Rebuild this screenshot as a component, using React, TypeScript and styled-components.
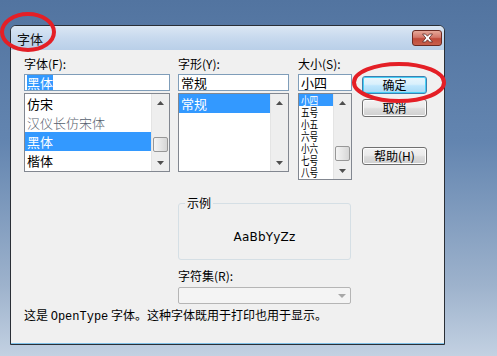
import styled, { createGlobalStyle } from 'styled-components'

const Global = createGlobalStyle`
  html, body {
    margin: 0;
    padding: 0;
  }
  body {
    font-family: "Noto Sans CJK SC", "Liberation Sans", sans-serif;
    font-size: 12px;
    color: #000;
  }
`

const Page = styled.div`
  position: relative;
  width: 497px;
  height: 356px;
  overflow: hidden;
  padding: 25px 0 0 10px;
  box-sizing: border-box;
  background: linear-gradient(180deg, #5274a0 0%, #6385b0 40%, #9db2cc 80%, #c3d1e2 100%);
`

const Dialog = styled.div`
  width: 435px;
  height: 320px;
  box-sizing: border-box;
  border: 1px solid #2a2f36;
  border-radius: 6px 6px 0 0;
  background: #f0f0f0;
  box-shadow: inset 0 -1px 0 #7fc0e8;
  display: flex;
  flex-direction: column;
  overflow: hidden;
`

const TitleBar = styled.div`
  height: 24px;
  flex-shrink: 0;
  display: flex;
  align-items: center;
  justify-content: space-between;
  padding: 0 2px 0 6px;
  background: linear-gradient(180deg, #dbe7f4 0%, #c7d9ee 50%, #b9cfe8 100%);
  font-size: 13px;
  color: #111;
`

const CloseButton = styled.div`
  width: 30px;
  height: 16px;
  box-sizing: border-box;
  border: 1px solid #6b2a22;
  border-radius: 3px;
  background: linear-gradient(180deg, #e6a899 0%, #d3776a 45%, #bf4a3a 55%, #c8604d 100%);
  display: flex;
  align-items: center;
  justify-content: center;
`

const Body = styled.div`
  padding: 6px 0 0 13px;
  display: flex;
  flex-direction: column;
`

const TopRow = styled.div`
  display: flex;
  align-items: flex-start;
`

const Column = styled.div<{ $w: number; $gap: number }>`
  width: ${(p) => p.$w}px;
  margin-right: ${(p) => p.$gap}px;
  display: flex;
  flex-direction: column;
`

const Label = styled.div`
  height: 16px;
  line-height: 16px;
  margin-bottom: 2px;
  font-size: 12px;
  white-space: nowrap;
`

const Input = styled.div`
  height: 17px;
  box-sizing: border-box;
  border: 1px solid #7f9db9;
  background: #fff;
  font-size: 13px;
  line-height: 15px;
  padding-left: 2px;
  white-space: nowrap;
  overflow: hidden;
`

const Highlight = styled.span`
  background: #3399ff;
  color: #fff;
`

const ListBox = styled.div<{ $h: number }>`
  margin-top: 2px;
  height: ${(p) => p.$h}px;
  box-sizing: border-box;
  border: 1px solid #828790;
  background: #fff;
  display: flex;
`

const Items = styled.div`
  flex: 1;
  overflow: hidden;
  display: flex;
  flex-direction: column;
`

const Item = styled.div<{ $h: number; $selected?: boolean; $faint?: boolean }>`
  height: ${(p) => p.$h}px;
  flex-shrink: 0;
  overflow: hidden;
  line-height: ${(p) => p.$h}px;
  padding-left: 2px;
  font-size: 13px;
  white-space: nowrap;
  background: ${(p) => (p.$selected ? '#3399ff' : 'transparent')};
  color: ${(p) => (p.$selected ? '#fff' : p.$faint ? '#55606e' : '#000')};
  font-weight: ${(p) => (p.$faint ? 300 : 400)};
`

const TallText = styled.span`
  display: inline-block;
  font-size: 10px;
  line-height: 10px;
  vertical-align: top;
  margin-top: 1px;
  transform: scale(0.86, 1.15);
  transform-origin: left top;
`

const ScrollBar = styled.div`
  width: 17px;
  flex-shrink: 0;
  background: #eeeeee;
  border-left: 1px solid #e4e4e4;
  display: flex;
  flex-direction: column;
`

const Arrow = styled.div`
  height: 17px;
  flex-shrink: 0;
  display: flex;
  align-items: center;
  justify-content: center;
`

const Track = styled.div`
  flex: 1;
`

const Thumb = styled.div<{ $top: number }>`
  margin: ${(p) => p.$top}px 1px 0 1px;
  height: 15px;
  box-sizing: border-box;
  border: 1px solid #979797;
  border-radius: 2px;
  background: linear-gradient(90deg, #f4f4f4 0%, #e6e6e6 50%, #d6d6d6 100%);
`

const ButtonColumn = styled.div`
  padding-top: 20px;
  width: 65px;
  display: flex;
  flex-direction: column;
`

const Button = styled.div<{ $primary?: boolean; $space?: number }>`
  height: 18px;
  margin-bottom: ${(p) => p.$space ?? 5}px;
  box-sizing: border-box;
  border: 1px solid ${(p) => (p.$primary ? '#3c7fb1' : '#707070')};
  border-radius: 3px;
  background: ${(p) =>
    p.$primary
      ? 'linear-gradient(180deg, #eaf6fd 0%, #d9f0fc 45%, #bee6fd 55%, #a7d9f5 100%)'
      : 'linear-gradient(180deg, #f2f2f2 0%, #ebebeb 45%, #dddddd 55%, #cfcfcf 100%)'};
  box-shadow: ${(p) => (p.$primary ? 'inset 0 0 0 1px #48d0f5' : 'inset 0 0 0 1px #fcfcfc')};
  font-size: 12px;
  line-height: 16px;
  text-align: center;
`

const Lower = styled.div`
  margin-left: 154px;
  width: 173px;
  display: flex;
  flex-direction: column;
`

const Group = styled.div`
  position: relative;
  margin-top: 23px;
  height: 57px;
  box-sizing: border-box;
  border: 1px solid #d5dfe5;
  border-radius: 3px;
  display: flex;
  align-items: center;
  justify-content: center;
  padding-top: 10px;
`

const Legend = styled.span`
  position: absolute;
  top: -9px;
  left: 6px;
  padding: 0 2px;
  background: #f0f0f0;
  font-size: 12px;
  line-height: 16px;
`

const Sample = styled.div`
  font-family: "DejaVu Sans", "Liberation Sans", sans-serif;
  font-size: 12px;
  letter-spacing: 0.2px;
`

const CharsetLabel = styled(Label)`
  margin-top: 8px;
  margin-bottom: 3px;
`

const Combo = styled.div`
  height: 17px;
  box-sizing: border-box;
  border: 1px solid #b5b5b5;
  border-radius: 2px;
  background: #f4f4f4;
  display: flex;
  justify-content: flex-end;
  align-items: center;
  padding-right: 4px;
`

const Info = styled.div`
  margin-top: 4px;
  font-size: 12px;
  line-height: 14px;
  white-space: nowrap;
`

const Mono = styled.span`
  font-family: "Liberation Mono", "DejaVu Sans Mono", monospace;
  font-size: 12px;
`

const Overlay = styled.svg`
  position: absolute;
  left: 0;
  top: 0;
  pointer-events: none;
`

const Up = () => (
  <svg width="7" height="4" viewBox="0 0 7 4">
    <path d="M0 4 L3.5 0 L7 4 Z" fill="#4f4f4f" />
  </svg>
)
const Down = () => (
  <svg width="7" height="4" viewBox="0 0 7 4">
    <path d="M0 0 L3.5 4 L7 0 Z" fill="#4f4f4f" />
  </svg>
)

function Scroll({ thumb }: { thumb?: number }) {
  return (
    <ScrollBar>
      <Arrow>
        <Up />
      </Arrow>
      <Track>{thumb !== undefined && <Thumb $top={thumb} />}</Track>
      <Arrow>
        <Down />
      </Arrow>
    </ScrollBar>
  )
}

const fonts = ['仿宋', '汉仪长仿宋体', '黑体', '楷体']
const sizes = ['小四', '五号', '小五', '六号', '小六', '七号', '八号']

export default function App() {
  return (
    <>
      <Global />
      <Page>
        <Dialog>
          <TitleBar>
            <span>字体</span>
            <CloseButton>
              <svg width="13" height="10" viewBox="0 0 13 10">
                <path
                  d="M1.5 1 L4.5 1 L6.5 3.2 L8.5 1 L11.5 1 L8.2 5 L11.5 9 L8.5 9 L6.5 6.8 L4.5 9 L1.5 9 L4.8 5 Z"
                  fill="#ffffff"
                  stroke="#5a2a26"
                  strokeWidth="0.8"
                />
              </svg>
            </CloseButton>
          </TitleBar>
          <Body>
            <TopRow>
              <Column $w={146} $gap={8}>
                <Label>字体(F):</Label>
                <Input>
                  <Highlight>黑体</Highlight>
                </Input>
                <ListBox $h={79}>
                  <Items>
                    {fonts.map((f) => (
                      <Item key={f} $h={19} $selected={f === '黑体'} $faint={f === '汉仪长仿宋体'}>
                        {f}
                      </Item>
                    ))}
                  </Items>
                  <Scroll thumb={26} />
                </ListBox>
              </Column>
              <Column $w={111} $gap={9}>
                <Label>字形(Y):</Label>
                <Input>常规</Input>
                <ListBox $h={79}>
                  <Items>
                    <Item $h={19} $selected>
                      常规
                    </Item>
                  </Items>
                  <Scroll />
                </ListBox>
              </Column>
              <Column $w={54} $gap={10}>
                <Label>大小(S):</Label>
                <Input>小四</Input>
                <ListBox $h={87}>
                  <Items>
                    {sizes.map((s, i) => (
                      <Item key={s} $h={12} $selected={i === 0}>
                        <TallText>{s}</TallText>
                      </Item>
                    ))}
                  </Items>
                  <Scroll thumb={35} />
                </ListBox>
              </Column>
              <ButtonColumn>
                <Button $primary>确定</Button>
                <Button $space={30}>取消</Button>
                <Button>帮助(H)</Button>
              </ButtonColumn>
            </TopRow>
            <Lower>
              <Group>
                <Legend>示例</Legend>
                <Sample>AaBbYyZz</Sample>
              </Group>
              <CharsetLabel>字符集(R):</CharsetLabel>
              <Combo>
                <svg width="8" height="4" viewBox="0 0 8 4">
                  <path d="M0 0 L4 4 L8 0 Z" fill="#a8a8a8" />
                </svg>
              </Combo>
            </Lower>
            <Info>
              这是 <Mono>OpenType</Mono> 字体。这种字体既用于打印也用于显示。
            </Info>
          </Body>
        </Dialog>
        <Overlay width="497" height="356" viewBox="0 0 497 356">
          <ellipse cx="28" cy="32" rx="26" ry="18" fill="none" stroke="#e41f26" strokeWidth="4" />
          <ellipse cx="399" cy="82.5" rx="45" ry="18.5" fill="none" stroke="#e41f26" strokeWidth="4" />
        </Overlay>
      </Page>
    </>
  )
}
